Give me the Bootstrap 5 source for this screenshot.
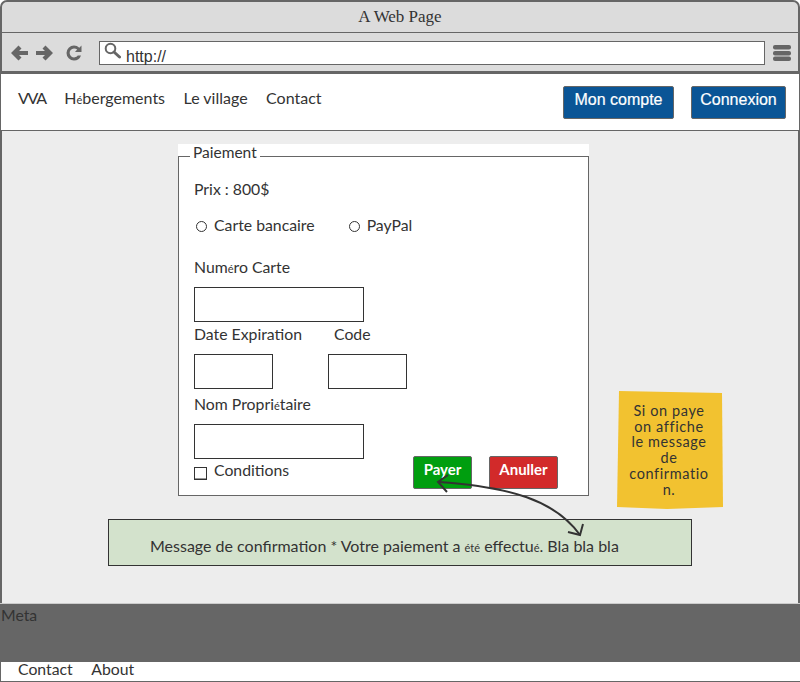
<!DOCTYPE html>
<html lang="fr">
<head>
    <meta charset="UTF-8">
    <title>A Web Page</title>
    <link href="https://cdn.jsdelivr.net/npm/bootstrap@5.3.0/dist/css/bootstrap.min.css" rel="stylesheet">
    <style>
        body { width: 800px; height: 682px; overflow: hidden; background: #fff; color: #333; font-family: "Lato", "Liberation Sans", sans-serif; font-size: 15.800px; line-height: 18px; }
        .small-e { font-size: 11px; }

        /* fenetre */
        .title-bar { height: 33px; background: #dcdcdc; border: 2px solid #666; border-bottom: 1px solid #666; border-radius: 7px 7px 0 0; line-height: 29px; font-family: "Liberation Serif", serif; font-size: 17px; }
        .tool-bar { height: 41px; background: #dcdcdc; border: 2px solid #666; border-top: 0; border-bottom-width: 3px; padding: 8px 7px 0 9px; }
        .url-box { width: 666px; height: 24px; background: #fff; border: 1px solid #666; padding-left: 4px; font-family: "Liberation Sans", sans-serif; font-size: 16px; line-height: 29px; }

        /* navigation */
        .top-nav { height: 57px; background: #fff; border: 2px solid #666; border-top: 0; border-bottom-width: 1px; border-left-width: 1px; border-right-width: 1px; padding: 15px 13px 0 17px; font-size: 16px; }
        .top-nav a { color: #333; text-decoration: none; }
        .nav-gap { margin-left: 18.500px; }
        .logo-link { letter-spacing: -1.300px; }
        .blue-btn { height: 33px; margin-top: -3px; padding: 0 0 5px; background: #0a5596; border: 1px solid #666; border-radius: 2px; color: #fff; font-family: "Liberation Sans", sans-serif; font-size: 16px; -webkit-text-stroke: 0.2px #fff; }

        /* contenu */
        .page-main { position: relative; height: 472px; background: #ededed; border-left: 2px solid #666; border-right: 2px solid #666; padding-top: 13px; }
        .pay-wrap { width: 411px; height: 352px; margin-left: 176px; background: #fff; }
        .pay-box { height: 352px; border: 1px solid #666; padding: 0 30px 6px 15px; }
        .pay-box legend { float: none; width: auto; margin: 0 0 0 -4px; padding: 0 3px 7px; font-size: 15.500px; line-height: 17px; }
        .field-label { height: 20px; white-space: nowrap; }
        .field-box { display: block; height: 35px; border: 1px solid #333; background: #fff; }
        .w-long { width: 170px; }
        .w-short { width: 79px; }
        .round-mark { flex: none; width: 11px; height: 11px; border: 1px solid #333; border-radius: 50%; margin-top: 5px; }
        .square-mark { flex: none; width: 13px; height: 13px; border: 1px solid #333; box-shadow: inset 0 -1px 0 #999; margin-top: 6px; }
        .action-btn { height: 33px; padding: 0 0 8px; border: 1px solid #666; border-radius: 2px; color: #fff; font-weight: 700; font-size: 15px; text-align: center; }
        .btn-pay { width: 59px; background: #009e0f; }
        .btn-cancel { width: 69px; background: #d22a2a; margin-left: 17px; }
        .pay-actions { margin-bottom: -8px; }
        .confirm-msg { width: 584px; height: 47px; margin: 23px 0 0 106px; padding: 17px 0 0 41px; background: #d3e2cc; border: 1px solid #333; font-size: 16px; }
        .sticky-note { position: absolute; left: 615px; top: 260px; width: 106px; height: 119px; padding: 12px 2px 0 0; background: #f2c230; clip-path: polygon(2px 0, 105px 2px, 106px 116px, 50px 118px, 0 116px); text-align: center; line-height: 15.700px; font-size: 14.500px; letter-spacing: .6px; }
        .flow-arrow { position: absolute; left: -2px; top: -131px; width: 800px; height: 682px; pointer-events: none; }

        /* pied */
        .meta-band { height: 59px; background: #666; border-top: 1px solid #ccc; padding-left: 1px; color: #333; line-height: 22px; }
        .foot-links { height: 20px; background: #fff; border-left: 1px solid #666; border-bottom: 1px solid #666; padding-left: 17px; line-height: 13px; }
    </style>
</head>
<body>
    <div class="title-bar text-center">A Web Page</div>

    <div class="tool-bar d-flex">
        <svg width="88" height="24" viewBox="0 0 88 24" fill="#666">
            <!-- precedent, suivant -->
            <path d="M0 12 7.500 4.500 10.500 7.500 8 10H17V14H8L10.500 16.500 7.500 19.500Z"/>
            <path d="M17 12 9.500 4.500 6.500 7.500 9 10H0V14H9L6.500 16.500 9.500 19.500Z" transform="translate(25 0)"/>
            <!-- recharger -->
            <path d="M63 4.500A7.500 7.500 0 0 0 63 19.500 7.500 7.500 0 0 0 70 14.500H66.800A4.500 4.500 0 1 1 66.200 8.600L64 11H70.500V4.500L68.300 6.700A7.500 7.500 0 0 0 63 4.500Z"/>
        </svg>
        <div class="url-box d-flex">
            <svg class="flex-shrink-0" width="17" height="17" viewBox="0 0 17 17" fill="none" stroke="#666">
                <circle cx="6.500" cy="6.500" r="4.800" stroke-width="2"/>
                <path d="M10 10 15.500 15" stroke-width="3" stroke-linecap="round"/>
            </svg>
            <span style="margin-left:5px">http://</span>
        </div>
        <svg class="ms-auto" width="18" height="21" viewBox="0 0 18 21" fill="#666">
            <rect x="0" y="4" width="18" height="4.500" rx="2"/>
            <rect x="0" y="10" width="18" height="4.500" rx="2"/>
            <rect x="0" y="15.500" width="18" height="4.500" rx="2"/>
        </svg>
    </div>

    <nav class="top-nav d-flex">
        <a href="#" class="logo-link">VVA</a>
        <a href="#" class="nav-gap">H<span class="small-e">é</span>bergements</a>
        <a href="#" class="nav-gap">Le village</a>
        <a href="#" class="nav-gap">Contact</a>
        <button class="blue-btn ms-auto" style="width:111px">Mon compte</button>
        <button class="blue-btn" style="width:95px;margin-left:17px">Connexion</button>
    </nav>

    <main class="page-main">
        <div class="pay-wrap">
            <fieldset class="pay-box">
                <legend>Paiement</legend>
                <div class="d-flex">
                    <div>
                        <div class="field-label" style="margin-top:12px">Prix : 800$</div>
                        <div class="field-label d-flex" style="margin-top:16px;padding-left:2px">
                            <span class="round-mark"></span><span style="margin-left:7px">Carte bancaire</span>
                            <span class="round-mark" style="margin-left:34px"></span><span style="margin-left:7px">PayPal</span>
                        </div>
                        <div class="field-label" style="margin-top:22px">Num<span class="small-e">é</span>ro Carte</div>
                        <span class="field-box w-long" style="margin-top:9px"></span>
                        <div class="field-label d-flex" style="margin-top:3px">
                            <span style="width:140px">Date Expiration</span>
                            <span>Code</span>
                        </div>
                        <div class="d-flex" style="margin-top:9px">
                            <span class="field-box w-short"></span>
                            <span class="field-box w-short" style="margin-left:55px"></span>
                        </div>
                        <div class="field-label" style="margin-top:6px">Nom Propri<span class="small-e">é</span>taire</div>
                        <span class="field-box w-long" style="margin-top:9px"></span>
                        <div class="field-label d-flex" style="margin-top:2px">
                            <span class="square-mark"></span><span style="margin-left:7px">Conditions</span>
                        </div>
                    </div>
                    <div class="pay-actions d-flex align-self-end ms-auto">
                        <button class="action-btn btn-pay">Payer</button>
                        <button class="action-btn btn-cancel">Anuller</button>
                    </div>
                </div>
            </fieldset>
        </div>

        <div class="confirm-msg">Message de confirmation * Votre paiement a <span class="small-e">été</span> effectu<span class="small-e">é</span>. Bla bla bla</div>

        <div class="sticky-note">Si on paye<br>on affiche<br>le message<br>de<br>confirmatio<br>n.</div>

        <svg class="flow-arrow" viewBox="0 0 800 682" fill="none" stroke="#333" stroke-width="2">
            <path d="M580 535C555 500 510 487 439 482"/>
            <path d="M448 475 438 482 447 492M568 532 580 535 583 524"/>
        </svg>
    </main>

    <div class="meta-band">Meta</div>
    <div class="foot-links d-flex">
        <span>Contact</span>
        <span class="nav-gap">About</span>
    </div>

    <script src="https://cdn.jsdelivr.net/npm/bootstrap@5.3.0/dist/js/bootstrap.bundle.min.js"></script>
</body>
</html>
